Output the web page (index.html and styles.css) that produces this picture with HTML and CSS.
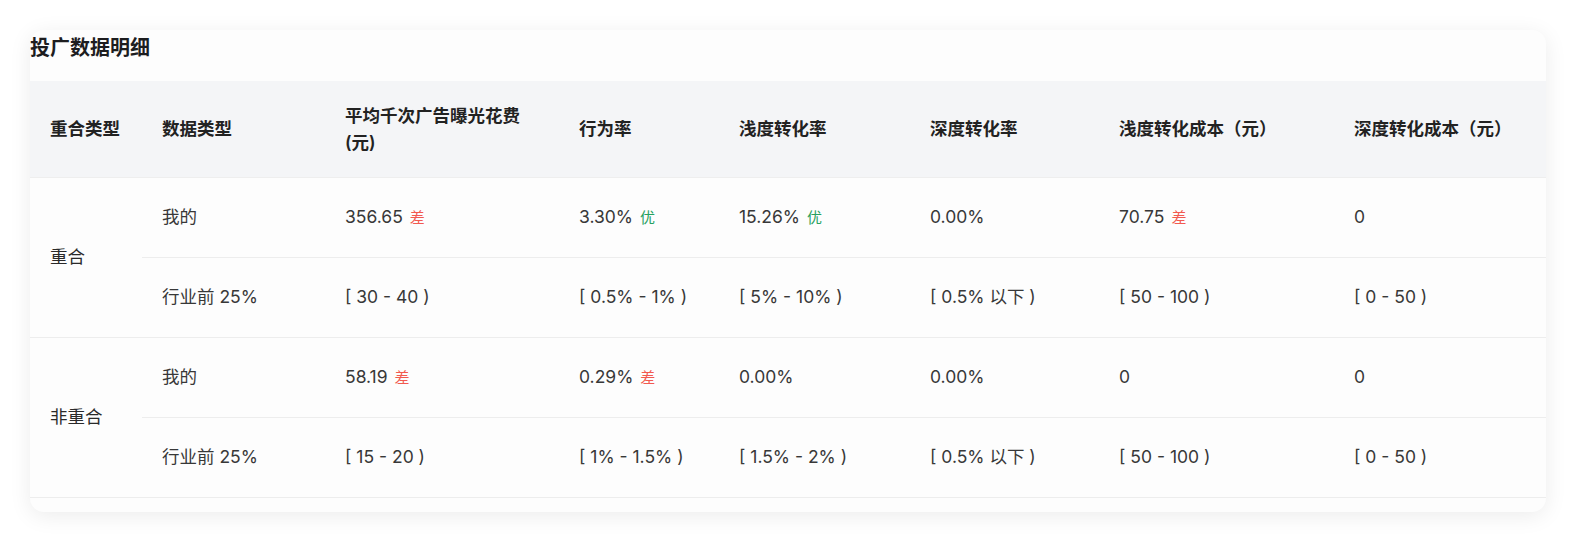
FILE: index.html
```html
<!DOCTYPE html>
<html lang="zh-CN">
<head>
<meta charset="utf-8">
<title>投广数据明细</title>
<link rel="stylesheet" href="styles.css">
</head>
<body>
<div class="page">
  <section class="card">
    <h2 class="card-title">投广数据明细</h2>
    <table class="data-table">
      <colgroup>
        <col class="c1"><col class="c2"><col class="c3"><col class="c4">
        <col class="c5"><col class="c6"><col class="c7"><col class="c8">
      </colgroup>
      <thead>
        <tr>
          <th>重合类型</th>
          <th>数据类型</th>
          <th>平均千次广告曝光花费<br>(元)</th>
          <th>行为率</th>
          <th>浅度转化率</th>
          <th>深度转化率</th>
          <th>浅度转化成本（元）</th>
          <th>深度转化成本（元）</th>
        </tr>
      </thead>
      <tbody>
        <tr class="sub">
          <td rowspan="2" class="group">重合</td>
          <td>我的</td>
          <td>356.65<span class="tag bad">差</span></td>
          <td>3.30%<span class="tag good">优</span></td>
          <td>15.26%<span class="tag good">优</span></td>
          <td>0.00%</td>
          <td>70.75<span class="tag bad">差</span></td>
          <td>0</td>
        </tr>
        <tr>
          <td>行业前 25%</td>
          <td>[ 30 - 40 )</td>
          <td>[ 0.5% - 1% )</td>
          <td>[ 5% - 10% )</td>
          <td>[ 0.5% 以下 )</td>
          <td>[ 50 - 100 )</td>
          <td>[ 0 - 50 )</td>
        </tr>
        <tr class="sub">
          <td rowspan="2" class="group">非重合</td>
          <td>我的</td>
          <td>58.19<span class="tag bad">差</span></td>
          <td>0.29%<span class="tag bad">差</span></td>
          <td>0.00%</td>
          <td>0.00%</td>
          <td>0</td>
          <td>0</td>
        </tr>
        <tr>
          <td>行业前 25%</td>
          <td>[ 15 - 20 )</td>
          <td>[ 1% - 1.5% )</td>
          <td>[ 1.5% - 2% )</td>
          <td>[ 0.5% 以下 )</td>
          <td>[ 50 - 100 )</td>
          <td>[ 0 - 50 )</td>
        </tr>
      </tbody>
    </table>
  </section>
</div>
</body>
</html>
```

FILE: styles.css
```css
* { box-sizing: border-box; }

html, body {
  margin: 0;
  padding: 0;
  background: #ffffff;
}

body {
  font-family: "Inter", "Noto Sans CJK SC", sans-serif;
  color: #333333;
}

.page {
  padding: 30px 31px 30px 30px;
}

.card {
  width: 1516px;
  background: #fdfdfd;
  border-radius: 14px;
  box-shadow: 0 4px 22px rgba(0, 0, 0, 0.08);
  padding-bottom: 14px;
}

.card-title {
  margin: 0;
  height: 51px;
  padding-top: 3px;
  font-size: 20px;
  line-height: 28px;
  font-weight: 700;
  color: #1d1d1f;
  font-family: "Noto Sans CJK SC", sans-serif;
}

.data-table {
  width: 100%;
  table-layout: fixed;
  border-collapse: collapse;
  font-size: 17.5px;
}

.c1 { width: 112px; }
.c2 { width: 183px; }
.c3 { width: 234px; }
.c4 { width: 160px; }
.c5 { width: 191px; }
.c6 { width: 189px; }
.c7 { width: 235px; }
.c8 { width: 212px; }

.data-table th {
  height: 96px;
  padding: 0 20px;
  background: #f4f5f7;
  text-align: left;
  font-weight: 600;
  color: #222222;
  line-height: 27px;
  vertical-align: middle;
  border-bottom: 1px solid #eeeeee;
}

.data-table td {
  height: 80px;
  padding: 0 20px;
  line-height: 24px;
  vertical-align: middle;
  color: #383838;
  border-bottom: 1px solid #ededed;
  white-space: nowrap;
}

.data-table td.group {
  color: #2a2a2a;
}

.tag {
  margin-left: 7px;
  font-size: 15px;
  font-family: "Noto Sans CJK SC", sans-serif;
}

.tag.bad { color: #f25a50; }
.tag.good { color: #27a15f; }
```
